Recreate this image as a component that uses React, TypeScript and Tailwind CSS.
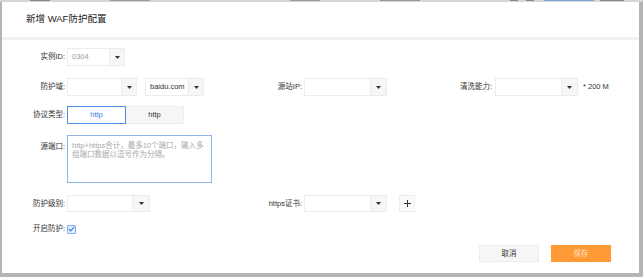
import React from 'react';

const font = { fontFamily: '"Liberation Sans", "Noto Sans CJK SC", sans-serif' };

interface SelectProps {
    className: string;
    arrowClassName?: string;
    value?: string;
    muted?: boolean;
}

const Select: React.FC<SelectProps> = ({ className, arrowClassName = 'w-[15px]', value, muted }) => (
    <div className={`flex h-[18px] border border-[#ececec] bg-white ${className}`}>
        <div className={`flex-1 flex items-center pl-[4px] text-[7.5px] ${muted ? 'text-[#a0a0a0]' : 'text-[#333]'}`}>
            {value}
        </div>
        <div className={`flex items-center justify-center bg-[#f6f6f6] border-l border-[#ececec] ${arrowClassName}`}>
            <svg width="5" height="3" viewBox="0 0 5 3">
                <path d="M0 0 L5 0 L2.5 3 Z" fill="#333" />
            </svg>
        </div>
    </div>
);

const Label: React.FC<{ text: string; className: string }> = ({ text, className }) => (
    <div className={`text-right text-[7.5px] text-[#333] whitespace-nowrap ${className}`}>{text}</div>
);

export default function App() {
    return (
        <div className="w-[643px] h-[277px] bg-[#b4b4b4] overflow-hidden" style={font}>
            {/* bits of the page behind the modal */}
            <div className="h-[2px] flex items-start bg-[#d6d6d6]">
                <div className="ml-[30px] w-[20px] h-[1px] bg-[#888]" />
                <div className="ml-[60px] w-[40px] h-[1px] bg-[#999]" />
                <div className="ml-[140px] w-[30px] h-[1px] bg-[#999]" />
                <div className="ml-[60px] w-[40px] h-[1px] bg-[#999]" />
                <div className="ml-[90px] w-[8px] h-[1px] bg-[#888]" />
                <div className="ml-[8px] w-[8px] h-[1px] bg-[#888]" />
                <div className="ml-[10px] w-[50px] h-[1px] bg-[#7fa7d6]" />
                <div className="ml-[6px] w-[24px] h-[1px] bg-[#888]" />
            </div>
            <div className="flex pl-[2px]">
                <div className="w-[637px] h-[271px] bg-white flex flex-col">
                    {/* header */}
                    <div className="h-[38px] border-b-[3px] border-[#f1f1f1] flex items-center pl-[24px]">
                        <span className="text-[9.5px] text-[#222]">新增 WAF防护配置</span>
                    </div>

                    {/* body */}
                    <div className="flex flex-col pt-[8px]">
                        <div className="flex items-center h-[18px]">
                            <Label text="实例ID:" className="w-[63px]" />
                            <Select className="ml-[2px] w-[58px]" value="0304" muted />
                        </div>

                        <div className="flex items-center h-[18px] mt-[12px]">
                            <div className="w-[238px] flex items-center">
                                <Label text="防护域:" className="w-[63px]" />
                                <Select className="ml-[2px] w-[70px]" />
                                <Select className="ml-[8px] w-[59px]" value="baidu.com" />
                            </div>
                            <div className="w-[190px] flex items-center">
                                <Label text="源站IP:" className="w-[62px]" />
                                <Select className="ml-[2px] w-[83px]" arrowClassName="w-[16px]" />
                            </div>
                            <div className="flex items-center">
                                <Label text="清洗能力:" className="w-[62px]" />
                                <Select className="ml-[3px] w-[83px]" arrowClassName="w-[16px]" />
                                <span className="ml-[5px] text-[7.5px] text-[#333]">* 200 M</span>
                            </div>
                        </div>

                        <div className="flex items-center h-[18px] mt-[10px]">
                            <Label text="协议类型:" className="w-[63px]" />
                            <div className="ml-[2px] flex h-[18px]">
                                <div className="w-[59px] flex items-center justify-center border border-[#4a90e2] bg-white text-[7.5px] text-[#3d85d8]">
                                    http
                                </div>
                                <div className="w-[58px] flex items-center justify-center border border-l-0 border-[#ececec] bg-[#f6f6f6] text-[7.5px] text-[#333]">
                                    http
                                </div>
                            </div>
                        </div>

                        <div className="flex items-start mt-[11px]">
                            <Label text="源端口:" className="w-[63px] mt-[6px]" />
                            <div className="ml-[2px] w-[145px] h-[48px] border border-[#8db6e6] pl-[4px] pt-[5px] text-[7.5px] leading-[9px] text-[#a9a9a9] whitespace-nowrap">
                                http+https合计，最多10个端口，输入多
                                <br />
                                组端口数据以逗号作为分隔。
                            </div>
                        </div>

                        <div className="flex items-center h-[17px] mt-[12px]">
                            <div className="w-[238px] flex items-center">
                                <Label text="防护级别:" className="w-[63px]" />
                                <Select className="ml-[2px] w-[83px] !h-[17px]" arrowClassName="w-[17px]" />
                            </div>
                            <div className="flex items-center">
                                <Label text="https证书:" className="w-[62px]" />
                                <Select className="ml-[2px] w-[83px] !h-[17px]" arrowClassName="w-[16px]" />
                                <div className="ml-[12px] w-[16px] h-[17px] border border-[#ececec] bg-[#fafafa] flex items-center justify-center">
                                    <svg width="7" height="7" viewBox="0 0 7 7">
                                        <path d="M3.5 0 V7 M0 3.5 H7" stroke="#333" strokeWidth="1" />
                                    </svg>
                                </div>
                            </div>
                        </div>

                        <div className="flex items-center h-[10px] mt-[12px]">
                            <Label text="开启防护:" className="w-[63px]" />
                            <div className="ml-[2px] w-[9px] h-[9px] border border-[#7fb0ea] bg-[#e3efff] rounded-[1px] flex items-center justify-center">
                                <svg width="7" height="6" viewBox="0 0 7 6">
                                    <path d="M0.8 3 L2.7 4.8 L6.2 0.8" fill="none" stroke="#3d85d8" strokeWidth="1.2" />
                                </svg>
                            </div>
                        </div>

                        <div className="flex justify-end pr-[28px] mt-[11px]">
                            <div className="w-[60px] h-[17px] border border-[#ececec] bg-[#f6f6f6] flex items-center justify-center text-[7.5px] text-[#333]">
                                取消
                            </div>
                            <div className="ml-[12px] w-[60px] h-[17px] bg-[#ff9a35] flex items-center justify-center text-[7.5px] text-[#ffe3c4]">
                                保存
                            </div>
                        </div>
                    </div>
                </div>
            </div>
        </div>
    );
}
